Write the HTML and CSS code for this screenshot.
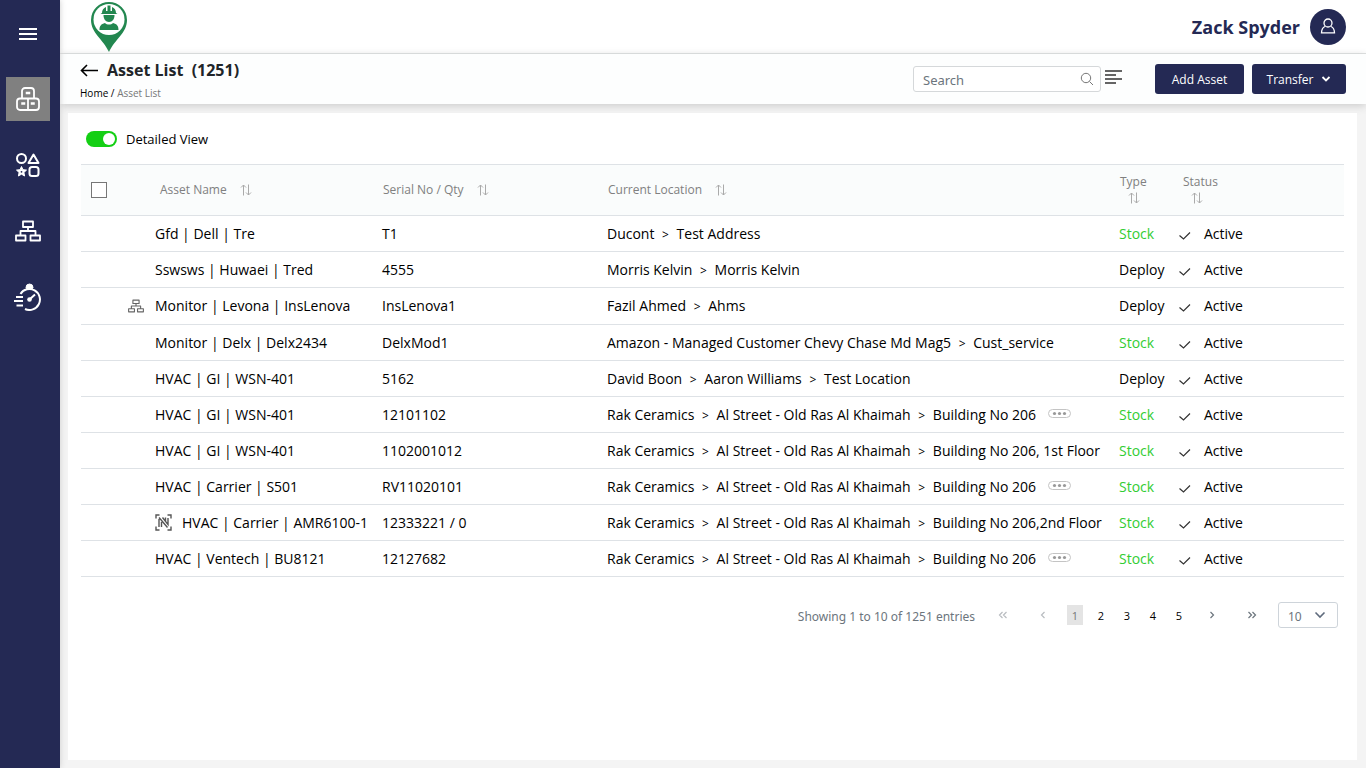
FILE: index.html
```html
<!DOCTYPE html>
<html lang="en">
<head>
<meta charset="utf-8">
<title>Asset List</title>
<link rel="stylesheet" href="styles.css">
</head>
<body>
<svg class="sprite" aria-hidden="true">
  <symbol id="sort" viewBox="0 0 14 14"><path d="M4.500 12.500V2M2 4.500L4.500 2 7 4.500M9.500 1.500V12M7 9.500L9.500 12l2.500-2.500" fill="none" stroke="currentColor"/></symbol>
  <symbol id="check" viewBox="0 0 14 12"><path d="M1.500 5.500l4 3.500L12 2.500" fill="none" stroke="currentColor" stroke-width="1.200"/></symbol>
  <symbol id="tree" viewBox="0 0 26 22"><path d="M8 1.500h10v5.500H8zM1 15.500h9.500v5H1zM15.500 15.500H25v5h-9.500zM13 7v4M5.500 15.500V11h15v4.500" fill="none" stroke="currentColor" stroke-width="1.800" stroke-linejoin="round"/></symbol>
  <symbol id="more" viewBox="0 0 24 10"><rect x=".5" y=".5" width="22" height="8" rx="4" fill="none" stroke="#c4c4c4"/><g fill="#999"><circle cx="6.500" cy="4.500" r="1.600"/><circle cx="11.500" cy="4.500" r="1.600"/><circle cx="16.500" cy="4.500" r="1.600"/></g></symbol>
</svg>
<div class="app">
  <nav class="sidebar" aria-label="Main">
    <button class="side-item menu" aria-label="Menu"><svg width="18" height="12" viewBox="0 0 18 12"><path d="M0 1h18M0 6h18M0 11h18" stroke="#fff" stroke-width="2"/></svg></button>
    <a class="side-item active" href="#" aria-label="Assets"><svg width="26" height="26" viewBox="0 0 26 26" fill="none" stroke="#fff" stroke-width="1.800"><path d="M7 12.500V5a3 3 0 0 1 3-3h6a3 3 0 0 1 3 3v7.500"/><rect x="2" y="12.500" width="22" height="11.500" rx="3"/><path d="M13 12.500V24"/><path d="M11.500 6.500h3v1h-3zM7 17h2.500v1H7zM16.500 17H19v1h-2.500z" stroke-width="1.500"/></svg></a>
    <a class="side-item" href="#" aria-label="Categories"><svg width="24" height="24" viewBox="0 0 24 24" fill="none" stroke="#fff" stroke-width="2"><circle cx="5.500" cy="5.500" r="4.500"/><path d="M17.500 1.500l5 8.500h-10z" stroke-linejoin="round"/><rect x="13.500" y="14" width="9" height="9" rx="2.500"/><path d="M5.500 13.500l1.500 3.200 3.500.4-2.600 2.400.7 3.500-3.100-1.800L2.400 23l.7-3.500L.5 17.100l3.500-.4z" fill="#fff" stroke-width="1"/><circle cx="5.500" cy="18.800" r=".9" fill="#242954" stroke="none"/></svg></a>
    <a class="side-item" href="#" aria-label="Hierarchy"><svg class="white" width="26" height="22"><use href="#tree"/></svg></a>
    <a class="side-item" href="#" aria-label="Activity"><svg width="28" height="28" viewBox="0 0 28 28" fill="none" stroke="#fff" stroke-width="2"><path d="M6.500 11A10.500 10.500 0 1 1 11 26"/><path d="M12 4.500a3.500 3.500 0 0 1 7 0l-1 1.500h-5z" fill="#fff" stroke-width="1"/><path d="M15.500 16.500L21 11.500M2 14h7M0 18h9M2.500 22.500H9"/><circle cx="15.500" cy="16.500" r="2.300" fill="#fff" stroke="none"/></svg></a>
  </nav>
  <div class="page">
    <header class="topbar">
      <svg class="logo" width="36" height="50" viewBox="0 0 36 50"><path d="M18 0A18 18 0 0 0 0 18C0 31 12 37 18 50 24 37 36 31 36 18A18 18 0 0 0 18 0z" fill="#22874f"/><circle cx="18" cy="17.500" r="15.500" fill="#fff"/><g fill="#22874f"><path d="M3.500 25C7 32 12 33 18 33s11-1 14.500-8L36 22 18 50 0 22z" fill="none"/><path d="M11 11c0-3 1.500-5 4-6V9h1.500V3.500h3V9H21V5c2.500 1 4 3 4 6l1.500 1H9.500z"/><path d="M12.500 13h11c0 4-2 7-5.500 7s-5.500-3-5.500-7z"/><path d="M8.500 28c0-4 1.500-6 5.500-7 2 2 6 2 8 0 4 1 5.500 3 5.500 7z"/></g></svg>
      <div class="user"><span class="user-name">Zack Spyder</span><button class="avatar" aria-label="Account"><svg width="16" height="18" viewBox="0 0 16 18" fill="none" stroke="#fff" stroke-width="1.300"><circle cx="8" cy="5" r="4"/><path d="M5 8.500c-2.300 1-3.400 3-3.500 6.300h13c-.1-3.300-1.200-5.300-3.500-6.300"/></svg></button></div>
    </header>
    <section class="titlebar">
      <div>
        <div class="heading"><a href="#" aria-label="Back"><svg width="18" height="14" viewBox="0 0 18 14" fill="none" stroke="#000" stroke-width="1.600"><path d="M18 7.500H1.500M7 2L1.500 7.500 7 13"/></svg></a><h1>Asset List&nbsp; (1251)</h1></div>
        <div class="crumbs"><a href="#">Home</a> / <span>Asset List</span></div>
      </div>
      <div class="tools">
        <div class="search"><input type="text" placeholder="Search" aria-label="Search"><svg width="14" height="14" viewBox="0 0 14 14" fill="none" stroke="#777"><circle cx="6" cy="6" r="4.700"/><path d="M9.500 9.500L13 13"/></svg></div>
        <button class="filter" aria-label="Filter"><svg width="18" height="14" viewBox="0 0 18 14" stroke="#333" stroke-width="1.500"><path d="M0 1h17M0 5h11M0 9h17M0 13h11"/></svg></button>
        <button class="btn add">Add Asset</button>
        <button class="btn">Transfer <svg width="10" height="8" viewBox="0 0 10 8"><path d="M1.500 2L5 5.500 8.500 2" fill="none" stroke="#fff" stroke-width="1.800"/></svg></button>
      </div>
    </section>
    <main class="card">
      <label class="view"><input type="checkbox" class="switch" checked>Detailed View</label>
      <table>
        <colgroup><col class="c-check"><col class="c-name"><col class="c-serial"><col><col class="c-type"><col class="c-status"></colgroup>
        <thead><tr>
          <th class="check-cell"><input type="checkbox" class="box" aria-label="Select all"></th>
          <th class="name-head">Asset Name <svg class="sort"><use href="#sort"/></svg></th>
          <th>Serial No / Qty <svg class="sort"><use href="#sort"/></svg></th>
          <th>Current Location <svg class="sort"><use href="#sort"/></svg></th>
          <th><span class="stack">Type<svg class="sort"><use href="#sort"/></svg></span></th>
          <th class="status-head"><span class="stack">Status<svg class="sort"><use href="#sort"/></svg></span></th>
        </tr></thead>
        <tbody>
          <tr><td></td><td>Gfd | Dell | Tre</td><td>T1</td><td>Ducont <i>&gt;</i> Test Address</td><td class="stock">Stock</td><td><svg class="tick"><use href="#check"/></svg>Active</td></tr>
          <tr><td></td><td>Sswsws | Huwaei | Tred</td><td>4555</td><td>Morris Kelvin <i>&gt;</i> Morris Kelvin</td><td>Deploy</td><td><svg class="tick"><use href="#check"/></svg>Active</td></tr>
          <tr class="parent"><td class="tree-cell"><svg class="tree"><use href="#tree"/></svg></td><td>Monitor | Levona | InsLenova</td><td>InsLenova1</td><td>Fazil Ahmed <i>&gt;</i> Ahms</td><td>Deploy</td><td><svg class="tick"><use href="#check"/></svg>Active</td></tr>
          <tr><td></td><td>Monitor | Delx | Delx2434</td><td>DelxMod1</td><td>Amazon - Managed Customer Chevy Chase Md Mag5 <i>&gt;</i> Cust_service</td><td class="stock">Stock</td><td><svg class="tick"><use href="#check"/></svg>Active</td></tr>
          <tr><td></td><td>HVAC | GI | WSN-401</td><td>5162</td><td>David Boon <i>&gt;</i> Aaron Williams <i>&gt;</i> Test Location</td><td>Deploy</td><td><svg class="tick"><use href="#check"/></svg>Active</td></tr>
          <tr><td></td><td>HVAC | GI | WSN-401</td><td>12101102</td><td>Rak Ceramics <i>&gt;</i> Al Street - Old Ras Al Khaimah <i>&gt;</i> Building No 206<svg class="more"><use href="#more"/></svg></td><td class="stock">Stock</td><td><svg class="tick"><use href="#check"/></svg>Active</td></tr>
          <tr><td></td><td>HVAC | GI | WSN-401</td><td>1102001012</td><td>Rak Ceramics <i>&gt;</i> Al Street - Old Ras Al Khaimah <i>&gt;</i> Building No 206, 1st Floor</td><td class="stock">Stock</td><td><svg class="tick"><use href="#check"/></svg>Active</td></tr>
          <tr><td></td><td>HVAC | Carrier | S501</td><td>RV11020101</td><td>Rak Ceramics <i>&gt;</i> Al Street - Old Ras Al Khaimah <i>&gt;</i> Building No 206<svg class="more"><use href="#more"/></svg></td><td class="stock">Stock</td><td><svg class="tick"><use href="#check"/></svg>Active</td></tr>
          <tr><td></td><td><svg class="tag" viewBox="0 0 17 17" fill="none" stroke="#555" stroke-width="1.400"><path d="M1 4.500V1h3.500M12.500 1H16v3.500M16 12.500V16h-3.500M4.500 16H1v-3.500"/><path d="M4 13V5M4 3.500l8.500 10M6.500 13V8M7.500 3.500l5.500 7V4M10.500 3.500v4" stroke-width="1.400"/></svg>HVAC | Carrier | AMR6100-1</td><td>12333221 / 0</td><td>Rak Ceramics <i>&gt;</i> Al Street - Old Ras Al Khaimah <i>&gt;</i> Building No 206,2nd Floor</td><td class="stock">Stock</td><td><svg class="tick"><use href="#check"/></svg>Active</td></tr>
          <tr><td></td><td>HVAC | Ventech | BU8121</td><td>12127682</td><td>Rak Ceramics <i>&gt;</i> Al Street - Old Ras Al Khaimah <i>&gt;</i> Building No 206<svg class="more"><use href="#more"/></svg></td><td class="stock">Stock</td><td><svg class="tick"><use href="#check"/></svg>Active</td></tr>
        </tbody>
      </table>
      <div class="pager">
        <span class="count">Showing 1 to 10 of 1251 entries</span>
        <button class="arrow off" aria-label="First page"><svg width="10" height="8" viewBox="0 0 10 8"><path d="M4.500 1l-3 3 3 3M8.500 1l-3 3 3 3"/></svg></button>
        <button class="arrow off" aria-label="Previous page"><svg width="10" height="8" viewBox="0 0 10 8"><path d="M6.500 1l-3 3 3 3"/></svg></button>
        <div class="nums"><button class="num on">1</button><button class="num">2</button><button class="num">3</button><button class="num">4</button><button class="num">5</button></div>
        <button class="arrow" aria-label="Next page"><svg width="10" height="8" viewBox="0 0 10 8"><path d="M3.500 1l3 3-3 3"/></svg></button>
        <button class="arrow" aria-label="Last page"><svg width="10" height="8" viewBox="0 0 10 8"><path d="M1.500 1l3 3-3 3M5.500 1l3 3-3 3"/></svg></button>
        <div class="size"><select aria-label="Rows per page"><option>10</option><option>25</option><option>50</option></select><svg width="12" height="8" viewBox="0 0 12 8"><path d="M1.500 1.500L6 6l4.500-4.500" fill="none" stroke="#5f6b7d" stroke-width="1.600"/></svg></div>
      </div>
    </main>
  </div>
</div>
</body>
</html>
```

FILE: styles.css
```css
* { box-sizing: border-box; }
body { margin: 0; background: #f4f4f4; color: #000; font-family: "Open Sans", sans-serif; font-size: 14px; }
button, input, select { font: inherit; }
button { border: 0; padding: 0; background: none; cursor: pointer; }
a { color: inherit; text-decoration: none; }
svg { flex: none; }
.sprite { display: none; }
.app { display: flex; min-height: 100vh; }

.sidebar { position: relative; z-index: 1; display: flex; flex-direction: column; gap: 22px; width: 60px; flex: none; padding: 12px 6px; background: #242954; box-shadow: 0 0 6px #ccc; }
.side-item { display: flex; align-items: center; justify-content: center; width: 44px; height: 44px; }
.menu { margin-bottom: -1px; }
.active { background: #808080; }
.white { color: #fff; }

.page { flex: 1; min-width: 0; display: flex; flex-direction: column; }
.topbar { display: flex; justify-content: space-between; align-items: center; height: 54px; padding: 0 20px 0 31px; background: #fff; border-bottom: 1px solid #dcdfdf; }
.user { display: flex; align-items: center; gap: 10px; }
.user-name { font-size: 18px; font-weight: 700; color: #242954; }
.avatar { display: flex; align-items: center; justify-content: center; width: 36px; height: 36px; border-radius: 50%; background: #242954; }

.titlebar { display: flex; justify-content: space-between; height: 50px; padding: 0 20px; background: #fdfefe; box-shadow: 0 2px 8px #ccc; }
.heading { display: flex; align-items: center; gap: 9px; height: 31px; }
.heading a { display: flex; }
h1 { margin: 0; font-size: 16px; font-weight: 700; color: #212529; }
.crumbs { font-size: 10px; line-height: 16px; }
.crumbs span { color: #777; }
.tools { display: flex; align-items: center; }
.search { position: relative; width: 188px; }
.search input { display: block; width: 100%; height: 26px; padding: 2px 30px 0 9px; border: 1px solid #d5d8da; border-radius: 3px; background: #fff; font-family: "Noto Sans", sans-serif; font-size: 13px; }
.search input::placeholder { color: #6c757d; }
.search svg { position: absolute; right: 7px; top: 6px; }
.filter { display: flex; margin: 0 32px 4px 4px; }
.btn { display: flex; align-items: center; justify-content: center; gap: 8px; width: 94px; height: 30px; border-radius: 3px; background: #242954; color: #fff; font-size: 12px; }
.add { width: 89px; margin-right: 8px; }

.card { flex: 1; margin: 9px 9px 8px 8px; padding: 16px 13px; background: #fff; }
.view { display: flex; width: max-content; align-items: center; gap: 9px; height: 20px; margin: 0 0 15px 5px; font-size: 13px; }
.switch { appearance: none; display: flex; align-items: center; justify-content: flex-end; width: 31px; height: 16px; margin: 0; padding: 0 2px; border-radius: 8px; background: #14cf14; }
.switch::before { content: ""; width: 12px; height: 12px; border-radius: 50%; background: #fff; }
.switch:not(:checked) { justify-content: flex-start; background: #aaa; }

table { width: 100%; border-collapse: collapse; table-layout: fixed; }
.c-check { width: 74px; }
.c-name { width: 227px; }
.c-serial { width: 225px; }
.c-type { width: 60px; }
.c-status { width: 165px; }
th { height: 51px; padding: 0 0 2px 1px; text-align: left; font-size: 12px; font-weight: 400; color: #808080; background: #fafcfc; border-top: 1px solid #dee2e6; border-bottom: 1px solid #dee2e6; }
td { height: 36px; padding: 0; white-space: nowrap; border-bottom: 1px solid #dee2e6; }
.parent td { height: 37px; padding-bottom: 1px; }
td i { margin: 0 4px; font-size: 12px; font-style: normal; }
.name-head { padding-left: 5px; }
.status-head { padding-left: 4px; }
.check-cell { padding: 0 0 0 10px; }
.box { appearance: none; display: block; width: 16px; height: 16px; margin: 0; border: 1px solid #777; background: #fff; }
.box:checked { background: #242954; }
.sort { width: 14px; height: 14px; margin-left: 9px; vertical-align: -3px; color: #aaa; }
.stack { display: inline-flex; flex-direction: column; line-height: 16px; }
.stack .sort { margin: 1px 0 0 7px; }
.stock { color: #32cd32; }
.tick { width: 14px; height: 12px; margin-right: 12px; margin-left: -1px; vertical-align: -3px; color: #333; }
.tree-cell { text-align: right; }
.tree { width: 16px; height: 14px; margin-right: 11px; vertical-align: -2px; color: #666; }
.more { width: 24px; height: 10px; margin-left: 12px; vertical-align: 1px; }
.tag { width: 17px; height: 17px; margin-right: 10px; vertical-align: -3px; }

.pager { display: flex; align-items: center; justify-content: flex-end; height: 26px; margin: 25px 6px 0 0; }
.count { margin-right: 18px; padding-top: 2px; font-family: "Noto Sans", sans-serif; font-size: 12px; color: #6c757d; }
.arrow { display: flex; align-items: center; justify-content: center; width: 20px; height: 20px; margin-right: 20px; }
.arrow path { fill: none; stroke: #6c757d; stroke-width: 1.2; }
.off path { stroke: #b8bcc0; }
.nums { display: flex; gap: 10px; margin: 0 15px 0 -6px; }
.num { width: 16px; height: 20px; font-size: 11px; }
.on { background: #e4e4e4; color: #777; }
.size { position: relative; width: 60px; margin-left: -4px; }
.size select { appearance: none; display: block; width: 100%; height: 26px; padding: 2px 9px 0; border: 1px solid #ced4da; border-radius: 3px; background: #fff; font-family: "Noto Sans", sans-serif; font-size: 12px; color: #6c757d; }
.size svg { position: absolute; right: 12px; top: 9px; pointer-events: none; }
```
